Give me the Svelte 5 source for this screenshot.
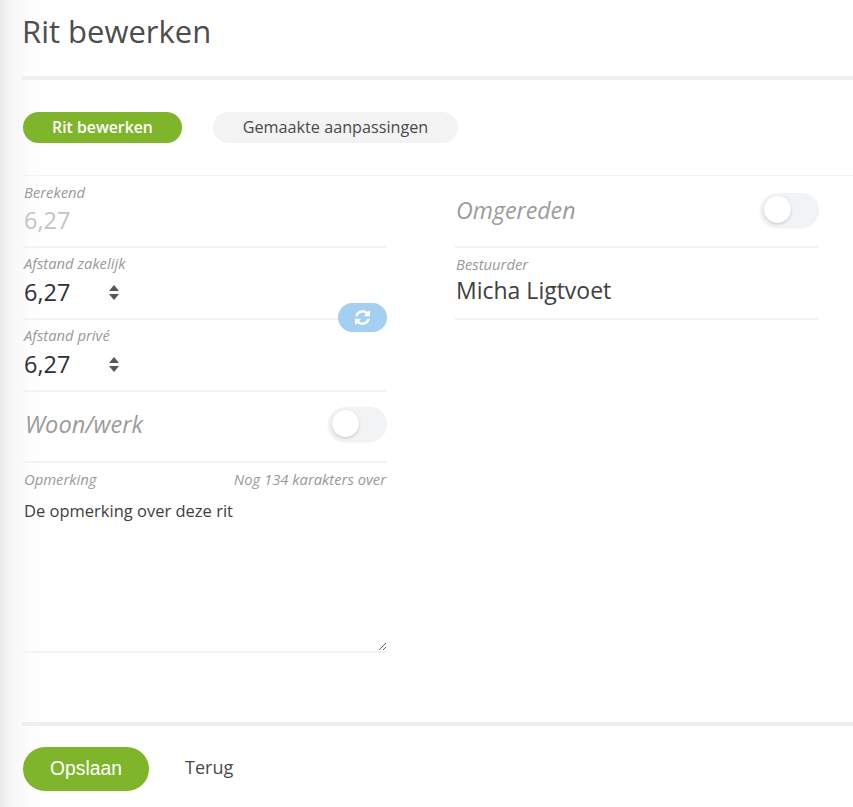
<script>
	let woonWerk = $state(false);
	let omgereden = $state(false);
	let remark = $state('De opmerking over deze rit');
</script>

<div class="page">
	<header class="page-header">
		<h1>Rit bewerken</h1>
	</header>

	<nav class="tabs">
		<button type="button" class="tab active">Rit bewerken</button>
		<button type="button" class="tab">Gemaakte aanpassingen</button>
	</nav>

	<div class="columns">
		<section class="column">
			<div class="field field-calc">
				<span class="label">Berekend</span>
				<span class="value muted">6,27</span>
			</div>

			<div class="split">
				<div class="field field-num">
					<span class="label">Afstand zakelijk</span>
					<div class="number">
						<span class="value dark">6,27</span>
						<span class="spinner"><i class="up"></i><i class="down"></i></span>
					</div>
				</div>
				<div class="field field-num">
					<span class="label">Afstand privé</span>
					<div class="number">
						<span class="value dark">6,27</span>
						<span class="spinner"><i class="up"></i><i class="down"></i></span>
					</div>
				</div>
				<button type="button" class="swap" aria-label="Wisselen">
					<svg viewBox="0 0 1536 1536" width="15" height="15" fill="#fff">
						<path d="M1511 928q0 5-1 7-64 268-268 434.5T764 1536q-146 0-282.5-55T238 1324l-129 129q-19 19-45 19t-45-19-19-45V960q0-26 19-45t45-19h448q26 0 45 19t19 45-19 45l-137 137q71 66 161 102t187 36q134 0 250-65t186-179q11-17 53-117 8-23 30-23h192q13 0 22.5 9.5t9.5 22.5zm25-800v448q0 26-19 45t-45 19h-448q-26 0-45-19t-19-45 19-45l138-138Q969 256 768 256q-134 0-250 65T332 500q-11 17-53 117-8 23-30 23H50q-13 0-22.5-9.5T18 608v-7q65-268 270-434.5T768 0q146 0 284 55.5T1297 212l130-129q19-19 45-19t45 19 19 45z"/>
					</svg>
				</button>
			</div>

			<div class="field field-toggle">
				<span class="toggle-label">Woon/werk</span>
				<button type="button" class="toggle" class:on={woonWerk} aria-label="Woon/werk" onclick={() => (woonWerk = !woonWerk)}></button>
			</div>

			<div class="field field-remark">
				<div class="remark-head">
					<span class="label">Opmerking</span>
					<span class="label">Nog 134 karakters over</span>
				</div>
				<textarea bind:value={remark}></textarea>
			</div>
		</section>

		<section class="column">
			<div class="field field-toggle right-toggle">
				<span class="toggle-label">Omgereden</span>
				<button type="button" class="toggle" class:on={omgereden} aria-label="Omgereden" onclick={() => (omgereden = !omgereden)}></button>
			</div>
			<div class="field field-driver">
				<span class="label">Bestuurder</span>
				<span class="value driver">Micha Ligtvoet</span>
			</div>
		</section>
	</div>

	<footer class="page-footer">
		<button type="button" class="save">Opslaan</button>
		<button type="button" class="back">Terug</button>
	</footer>
</div>

<style>
	:global(body) {
		margin: 0;
		background: #fff;
	}

	.page {
		box-sizing: border-box;
		width: 853px;
		height: 807px;
		padding-left: 22px;
		overflow: hidden;
		font-family: 'Open Sans', 'Noto Sans', sans-serif;
		color: #4a4a4a;
		background: linear-gradient(to right, #e9e9e9 0, #f6f6f6 10px, #fdfdfd 30px, #fff 48px);
	}

	.page-header {
		height: 76px;
		border-bottom: 4px solid #f0f0f0;
	}

	h1 {
		margin: 0;
		padding-top: 11px;
		font-size: 31px;
		line-height: 41px;
		font-weight: 400;
		color: #4d4d4d;
	}

	.tabs {
		display: flex;
		gap: 31px;
		padding: 32px 0 32px 1px;
		border-bottom: 1px solid #f3f3f3;
	}

	.tab {
		width: 245px;
		height: 31px;
		padding: 0 0 2px;
		border: none;
		border-radius: 16px;
		background: #f3f3f4;
		font: 500 16.2px 'Open Sans', sans-serif;
		color: #4a4a4a;
	}

	.tab.active {
		width: 159px;
		background: #7fb52b;
		color: #fff;
		font-weight: 600;
		font-size: 15.8px;
	}

	.columns {
		display: flex;
		gap: 68px;
		padding-left: 1px;
	}

	.column {
		width: 364px;
	}

	.field {
		box-sizing: border-box;
		border-bottom: 2px solid #f3f3f3;
	}

	.label {
		display: block;
		padding: 0 1px;
		font-size: 14.8px;
		line-height: 18px;
		font-style: italic;
		color: #999;
	}

	.value {
		display: block;
		padding-left: 1px;
		font-size: 23.5px;
		line-height: 30px;
	}

	.muted {
		color: #c4c4c4;
	}

	.dark {
		color: #2f2f38;
	}

	.field-calc {
		height: 72px;
		padding-top: 7px;
	}

	.field-calc .value {
		margin-top: 4px;
	}

	.split {
		position: relative;
	}

	.field-num {
		height: 72px;
		padding-top: 6px;
	}

	.number {
		display: flex;
		align-items: center;
		gap: 39px;
		margin-top: 5px;
	}

	.spinner {
		display: flex;
		flex-direction: column;
		gap: 3px;
	}

	.spinner i {
		display: block;
		width: 0;
		height: 0;
		border-left: 5px solid transparent;
		border-right: 5px solid transparent;
	}

	.spinner .up {
		border-bottom: 6px solid #555;
	}

	.spinner .down {
		border-top: 6px solid #555;
	}

	.swap {
		position: absolute;
		right: 0;
		top: 55px;
		display: flex;
		align-items: center;
		justify-content: center;
		width: 49px;
		height: 29px;
		padding: 0;
		border: none;
		border-radius: 15px;
		background: #a3cff0;
	}

	.field-toggle {
		display: flex;
		align-items: center;
		justify-content: space-between;
		height: 71px;
		padding: 0 0 5px 2px;
	}

	.right-toggle {
		height: 72px;
		padding: 0 0 3px 1px;
	}

	.toggle-label {
		font-size: 23.6px;
		font-style: italic;
		color: #9b9b9b;
	}

	.right-toggle .toggle-label {
		font-size: 23.2px;
	}

	.toggle {
		position: relative;
		width: 58px;
		height: 34px;
		padding: 0;
		border: none;
		border-radius: 17px;
		background: #f2f3f5;
		box-shadow: -1px 1px 2px rgba(0, 0, 0, 0.08);
	}

	.toggle::after {
		content: '';
		position: absolute;
		left: 3px;
		top: 3px;
		width: 27px;
		height: 27px;
		border-radius: 50%;
		background: #fff;
		box-shadow: 0 1px 3px rgba(0, 0, 0, 0.2);
	}

	.toggle.on::after {
		left: 28px;
	}

	.field-remark {
		height: 190px;
		padding-top: 7px;
		display: flex;
		flex-direction: column;
	}

	.remark-head {
		display: flex;
		justify-content: space-between;
	}

	textarea {
		flex: 1;
		display: block;
		box-sizing: border-box;
		width: 100%;
		margin: 0;
		padding: 12px 0 0 1px;
		border: none;
		outline: none;
		background: transparent;
		font: 16.5px/22px 'Open Sans', sans-serif;
		color: #404040;
	}

	.field-driver {
		height: 72px;
		padding-top: 7px;
	}

	.driver {
		margin-top: 3px;
		font-size: 23px;
		line-height: 28px;
		color: #404040;
	}

	.page-footer {
		display: flex;
		align-items: center;
		gap: 36px;
		margin-top: 69px;
		padding: 21px 0 0 1px;
		border-top: 4px solid #efefef;
	}

	.save {
		width: 126px;
		height: 44px;
		padding: 0;
		border: none;
		border-radius: 22px;
		background: #7fb52b;
		color: #fff;
		font: 19.3px 'Liberation Sans', sans-serif;
	}

	.back {
		padding: 0 0 4px;
		border: none;
		background: none;
		color: #4a4a4a;
		font: 18px 'Open Sans', sans-serif;
	}
</style>
